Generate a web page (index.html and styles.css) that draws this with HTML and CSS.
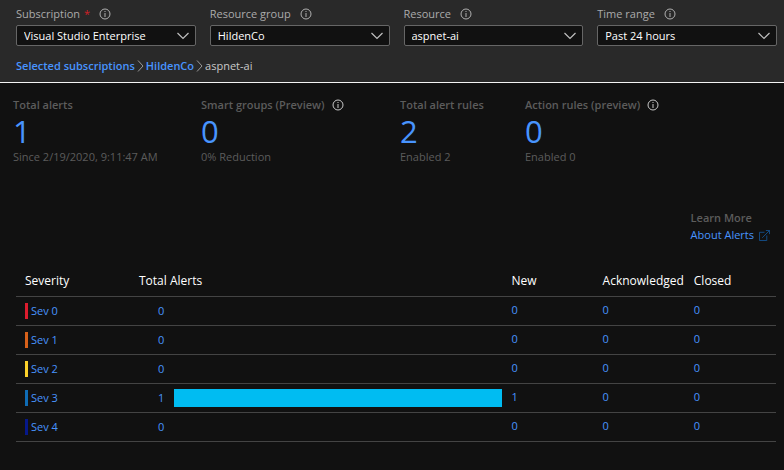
FILE: index.html
```html
<!DOCTYPE html>
<html lang="en">
<head>
<meta charset="utf-8">
<title>Alerts</title>
<link rel="stylesheet" href="styles.css">
</head>
<body>
<svg class="defs" aria-hidden="true">
  <symbol id="info" viewBox="0 0 12 12"><circle cx="6" cy="6" r="5" fill="none" stroke="currentColor"/><path d="M6 3v1M6 5v4" stroke="currentColor"/></symbol>
  <symbol id="down" viewBox="0 0 12 8"><path d="M.5 1 6 6.500 11.500 1" fill="none" stroke="currentColor" stroke-width="1.200"/></symbol>
  <symbol id="right" viewBox="0 0 7 12"><path d="M1 .5 6 6 1 11.500" fill="none" stroke="currentColor"/></symbol>
</svg>
<header class="filters">
  <form class="fields">
    <div class="field">
      <div class="caption"><label for="sub">Subscription <span class="required">*</span></label><svg class="info"><use href="#info"/></svg></div>
      <div class="picker"><select id="sub"><option>Visual Studio Enterprise</option></select><svg class="down"><use href="#down"/></svg></div>
    </div>
    <div class="field">
      <div class="caption"><label for="group">Resource group</label><svg class="info"><use href="#info"/></svg></div>
      <div class="picker"><select id="group"><option>HildenCo</option></select><svg class="down"><use href="#down"/></svg></div>
    </div>
    <div class="field">
      <div class="caption"><label for="res">Resource</label><svg class="info"><use href="#info"/></svg></div>
      <div class="picker"><select id="res"><option>aspnet-ai</option></select><svg class="down"><use href="#down"/></svg></div>
    </div>
    <div class="field">
      <div class="caption"><label for="time">Time range</label><svg class="info"><use href="#info"/></svg></div>
      <div class="picker"><select id="time"><option>Past 24 hours</option></select><svg class="down"><use href="#down"/></svg></div>
    </div>
  </form>
  <nav class="crumbs"><a href="#subs">Selected subscriptions</a><svg><use href="#right"/></svg><a href="#group">HildenCo</a><svg><use href="#right"/></svg><span>aspnet-ai</span></nav>
</header>
<main>
  <section class="stats">
    <div><h2>Total alerts</h2><a class="figure" href="#alerts">1</a><p>Since 2/19/2020, 9:11:47 AM</p></div>
    <div><h2>Smart groups (Preview)<svg class="info"><use href="#info"/></svg></h2><a class="figure" href="#groups">0</a><p>0% Reduction</p></div>
    <div><h2>Total alert rules</h2><a class="figure" href="#rules">2</a><p>Enabled 2</p></div>
    <div><h2>Action rules (preview)<svg class="info"><use href="#info"/></svg></h2><a class="figure" href="#actions">0</a><p>Enabled 0</p></div>
  </section>
  <aside class="learn">
    <div>
      <h2>Learn More</h2>
      <a href="#about">About Alerts<svg viewBox="0 0 12 12"><path d="M6 2.500H.5v9h8V6M3.500 8.500l8-8M7.500.5h4v4" fill="none" stroke="currentColor"/></svg></a>
    </div>
  </aside>
  <table>
    <colgroup><col class="severity"><col class="total"><col><col><col></colgroup>
    <thead><tr><th>Severity</th><th>Total Alerts</th><th>New</th><th>Acknowledged</th><th>Closed</th></tr></thead>
    <tbody>
      <tr><td><a class="sev sev0" href="#sev0">Sev 0</a></td><td><div class="count"><a href="#sev0">0</a></div></td><td><a href="#n0">0</a></td><td><a href="#a0">0</a></td><td><a href="#c0">0</a></td></tr>
      <tr><td><a class="sev sev1" href="#sev1">Sev 1</a></td><td><div class="count"><a href="#sev1">0</a></div></td><td><a href="#n1">0</a></td><td><a href="#a1">0</a></td><td><a href="#c1">0</a></td></tr>
      <tr><td><a class="sev sev2" href="#sev2">Sev 2</a></td><td><div class="count"><a href="#sev2">0</a></div></td><td><a href="#n2">0</a></td><td><a href="#a2">0</a></td><td><a href="#c2">0</a></td></tr>
      <tr><td><a class="sev sev3" href="#sev3">Sev 3</a></td><td><div class="count"><a href="#sev3">1</a><span class="bar"></span></div></td><td><a href="#n3">1</a></td><td><a href="#a3">0</a></td><td><a href="#c3">0</a></td></tr>
      <tr><td><a class="sev sev4" href="#sev4">Sev 4</a></td><td><div class="count"><a href="#sev4">0</a></div></td><td><a href="#n4">0</a></td><td><a href="#a4">0</a></td><td><a href="#c4">0</a></td></tr>
    </tbody>
  </table>
</main>
</body>
</html>
```
FILE: styles.css
```css
* { box-sizing: border-box; }
body { margin: 0; background: #111; color: #fff; font: 11px/16px "Open Sans", "Noto Sans", sans-serif; }
a { color: #4894fe; text-decoration: none; }
h2, p { margin: 0; font-size: 11px; color: #5c5c5c; }
h2 { font-weight: 600; display: flex; align-items: center; gap: 7px; }
.defs { position: absolute; width: 0; height: 0; }
.info { width: 12px; height: 12px; color: #b0b0b0; flex: none; }

.filters { background: #292929; border-bottom: 1px solid #f4f4f4; padding: 6px 7px 8px 16px; }
.fields { display: grid; grid-template-columns: repeat(4, 1fr); gap: 14px; }
.caption { display: flex; align-items: center; gap: 9px; color: #ababab; margin-bottom: 3px; }
.required { color: #d02027; margin-left: 1px; }
.picker { position: relative; }
select { display: block; width: 100%; height: 21px; padding: 0 24px 0 7px; appearance: none; border: 1px solid #666; border-radius: 2px; background: #111; color: #fff; font: inherit; }
.down { position: absolute; right: 7px; top: 7px; width: 12px; height: 8px; color: #c0c0c0; pointer-events: none; }
.crumbs { display: flex; align-items: center; gap: 2px; margin-top: 12px; color: #c8c8c8; }
.crumbs a { font-weight: 600; }
.crumbs svg { width: 7px; height: 12px; color: #999; }

.stats { display: grid; grid-template-columns: 188fr 199fr 125fr 259fr; padding: 14px 0 0 13px; }
.stats .info { color: #c8c8c8; }
.figure { display: block; font-size: 31px; line-height: 36px; }
.learn { display: flex; justify-content: flex-end; margin-top: 45px; padding-right: 14px; }
.learn a { display: flex; align-items: center; gap: 5px; line-height: 18px; }
.learn svg { width: 11px; height: 11px; color: #14508c; }

table { width: calc(100% - 24px); margin: 22px 8px 0 16px; table-layout: fixed; border-collapse: separate; border-spacing: 0; }
.severity { width: 15%; }
.total { width: 49%; }
th, td { padding: 0 0 0 9px; text-align: left; border-bottom: 1px solid #444; height: 29px; }
th { font-weight: 400; height: 31px; font-size: 12px; }
td { padding-bottom: 3px; }
td:nth-child(-n+2) { padding-bottom: 0; }
.sev { display: flex; align-items: center; gap: 3px; }
.sev::before { content: ""; width: 3px; height: 16px; }
.sev0::before { background: #dc1c2e; }
.sev1::before { background: #d8611a; }
.sev2::before { background: #fcd12a; }
.sev3::before { background: #0f6cb5; }
.sev4::before { background: #06188a; }
.count { display: flex; align-items: center; gap: 10px; padding-left: 19px; }
.bar { flex: 1; height: 18px; background: #00bcf2; }
```
